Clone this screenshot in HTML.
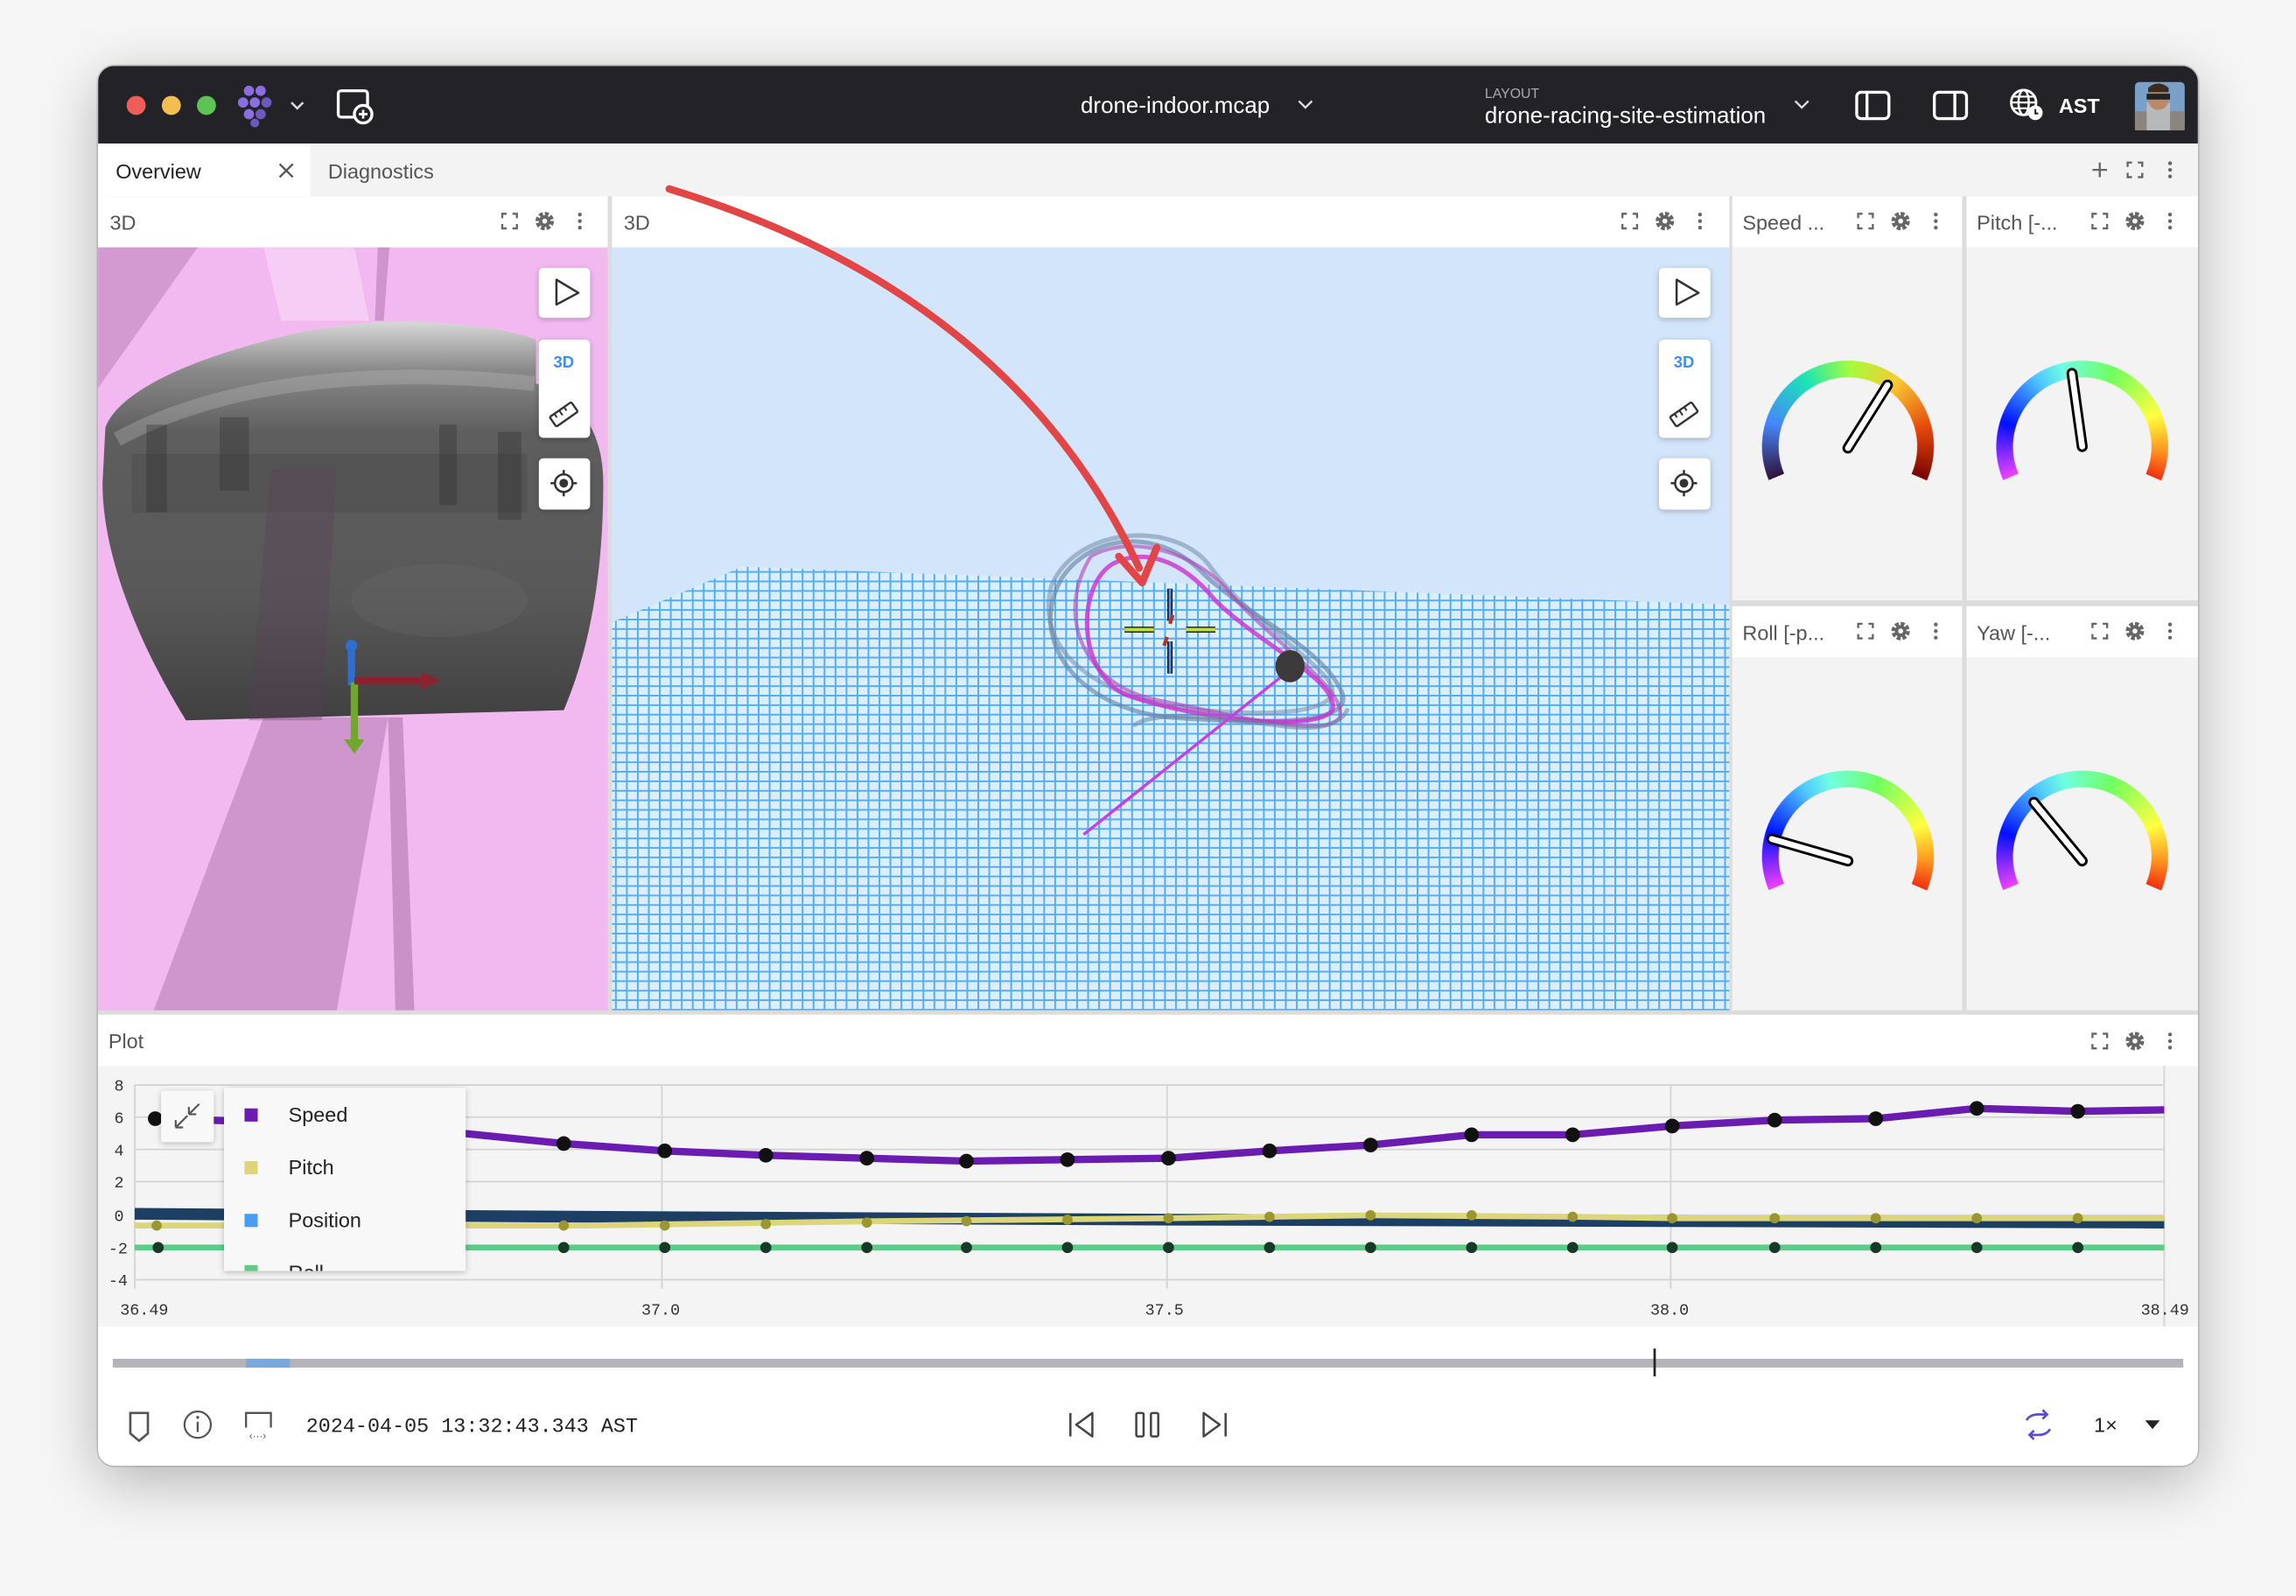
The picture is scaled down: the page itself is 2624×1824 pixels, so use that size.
<!DOCTYPE html>
<html><head><meta charset="utf-8"><style>
html,body{margin:0;padding:0;width:2624px;height:1824px;overflow:hidden;background:#f6f6f6;}
#w{position:absolute;left:0;top:0;width:1568px;height:1090px;transform:scale(1.67347,1.67339);transform-origin:0 0;font-family:"Liberation Sans",sans-serif;}
.win{position:absolute;left:67px;top:45px;width:1434px;height:956px;border-radius:11px;background:#fff;box-shadow:0 10px 40px rgba(0,0,0,.28),0 0 0 1px rgba(0,0,0,.15);overflow:hidden;}
.g{position:absolute;width:118px;height:118px;border-radius:50%;
-webkit-mask:radial-gradient(circle closest-side,transparent 47px,#000 47.6px,#000 58.4px,transparent 59px);
mask:radial-gradient(circle closest-side,transparent 47px,#000 47.6px,#000 58.4px,transparent 59px);}
.sp{background:conic-gradient(from 247deg,#30123b 0deg,#4686fb 40deg,#1ae4b6 80deg,#a4fc3c 115deg,#f9c932 150deg,#e4460a 190deg,#7a0403 226deg,transparent 226.5deg);}
.rb{background:conic-gradient(from 247deg,#f040ff 0deg,#0010ff 40deg,#50c8ff 80deg,#70ffe0 100deg,#70ff60 135deg,#ffff40 180deg,#ff9a20 205deg,#f03010 226deg,transparent 226.5deg);}
</style></head><body><div id="w">
<div class="win"></div>
<svg style="position:absolute;left:0;top:0" width="1568" height="1090" viewBox="0 0 1568 1090">
<defs>
<clipPath id="wc"><rect x="67" y="45" width="1434" height="956" rx="11"/></clipPath>
<pattern id="grid" width="7.5" height="6.5" patternUnits="userSpaceOnUse"><rect width="7.5" height="6.5" fill="#dbeefc"/><path d="M0 0.6H7.5M0.6 0V6.5" stroke="#56aef0" stroke-width="1.2"/></pattern>
<linearGradient id="cam" x1="0" y1="0" x2="0" y2="1"><stop offset="0" stop-color="#d8d8d8"/><stop offset=".12" stop-color="#8a8a8a"/><stop offset=".28" stop-color="#5e5e5e"/><stop offset=".7" stop-color="#585858"/><stop offset="1" stop-color="#404040"/></linearGradient>
<filter id="sh" x="-20%" y="-20%" width="140%" height="140%"><feDropShadow dx="0" dy="1" stdDeviation="2" flood-opacity=".25"/></filter>
<g id="hic"><path d="M-5 -2V-5H-2M2 -5H5V-2M5 2V5H2M-2 5H-5V2" fill="none" stroke="#666" stroke-width="1.4"/></g>
<g id="gear"><circle r="4.6" fill="none" stroke="#666" stroke-width="3.4" stroke-dasharray="2.4 1.2"/><circle r="4" fill="#666"/><circle r="1.7" fill="#fff"/></g>
<g id="keb"><circle cy="-4.5" r="1.3" fill="#666"/><circle r="1.3" fill="#666"/><circle cy="4.5" r="1.3" fill="#666"/></g>
<g id="ic3"><use href="#hic"/><use href="#gear" x="24"/><use href="#keb" x="48"/></g>
</defs>
<g clip-path="url(#wc)">
<rect x="67" y="45" width="1434" height="53" fill="#232327"/>
<circle cx="93" cy="72" r="6.5" fill="#ee5e56"/><circle cx="117" cy="72" r="6.5" fill="#f4bd4f"/><circle cx="141" cy="72" r="6.5" fill="#5dc353"/>
<g fill="#8b6fe0"><circle cx="170" cy="62" r="3.5"/><circle cx="178" cy="62" r="3.5"/><circle cx="166" cy="70" r="3.5"/><circle cx="174" cy="70" r="3.5"/><circle cx="182" cy="70" r="3.5" fill="#6f59c0"/><circle cx="170" cy="78" r="3.5"/><circle cx="178" cy="78" r="3.5" fill="#6f59c0"/><circle cx="174" cy="84" r="3" fill="#6f59c0"/></g>
<path d="M199 70l4 4 4-4" fill="none" stroke="#ddd" stroke-width="1.5"/>
<rect x="231" y="62" width="20" height="18" rx="2" fill="none" stroke="#fff" stroke-width="2"/><circle cx="248" cy="78" r="6" fill="#232327" stroke="#fff" stroke-width="2"/><path d="M248 75v6M245 78h6" stroke="#fff" stroke-width="1.6"/>
<text x="738" y="77" fill="#fff" font-size="15.5">drone-indoor.mcap</text>
<path d="M887 69l4.5 4.5 4.5-4.5" fill="none" stroke="#ddd" stroke-width="1.4"/>
<text x="1014" y="67" fill="#aaa" font-size="9.5">LAYOUT</text>
<text x="1014" y="84" fill="#fff" font-size="15.5">drone-racing-site-estimation</text>
<path d="M1226 69l4.5 4.5 4.5-4.5" fill="none" stroke="#ddd" stroke-width="1.4"/>
<rect x="1268" y="63" width="22" height="18" rx="3" fill="none" stroke="#fff" stroke-width="2"/><path d="M1275 63v18" stroke="#fff" stroke-width="2"/>
<rect x="1321" y="63" width="22" height="18" rx="3" fill="none" stroke="#fff" stroke-width="2"/><path d="M1335 63v18" stroke="#fff" stroke-width="2"/>
<circle cx="1382" cy="70" r="8.5" fill="none" stroke="#fff" stroke-width="1.7"/><ellipse cx="1382" cy="70" rx="3.5" ry="8.5" fill="none" stroke="#fff" stroke-width="1.5"/><path d="M1374 70h17M1375 66h14M1375 74h14" stroke="#fff" stroke-width="1.3"/><circle cx="1390" cy="77" r="5" fill="#fff"/><path d="M1390 74.5v3h2" stroke="#232327" stroke-width="1.2" fill="none"/>
<text x="1406" y="77" fill="#fff" font-size="14" font-weight="bold">AST</text>
<rect x="1458" y="56" width="34" height="33" rx="3" fill="#7aa0c8"/><rect x="1458" y="76" width="34" height="13" fill="#8a8580"/><rect x="1466" y="70" width="16" height="19" fill="#b6b8ba"/><circle cx="1474" cy="68" r="7" fill="#b88a6a"/><rect x="1466" y="64" width="16" height="4" fill="#222"/><path d="M1467 60q7-6 14 0v3h-14z" fill="#3a2a20"/>
<rect x="67" y="98" width="1434" height="36" fill="#f3f3f3"/>
<rect x="67" y="98" width="145" height="36" fill="#fff"/>
<text x="79" y="122" fill="#222" font-size="14">Overview</text>
<path d="M191 112l9 9M200 112l-9 9" stroke="#555" stroke-width="1.4"/>
<text x="224" y="122" fill="#555" font-size="14">Diagnostics</text>
<path d="M1434 111v10M1429 116h10" stroke="#666" stroke-width="1.4"/><use href="#hic" x="1458" y="116"/><use href="#keb" x="1482" y="116"/>
<rect x="67" y="134" width="1434" height="560" fill="#dcdcdc"/>
<rect x="67" y="134" width="348" height="35" fill="#fff"/>
<text x="75" y="157" fill="#555" font-size="14">3D</text><use href="#ic3" x="348" y="151"/>
<rect x="67" y="169" width="348" height="521" fill="#f2b9f1"/>
<path d="M67 169h68L67 265z" fill="#d29ad0"/>
<path d="M180 169h62l10 50h-60z" fill="#f6cdf5"/>
<path d="M258 169h8l-4 50h-6z" fill="#cf94cd"/>
<path d="M180 490h85l-35 200H105z" fill="#cf95cd"/>
<path d="M265 490h10l8 200h-13z" fill="#ca90c8"/>
<path d="M72 292C80 270 120 250 170 236C210 224 250 218 290 220C330 222 350 226 366 232V262C400 272 412 300 412 330C412 400 400 450 385 485L127 492C95 440 70 380 70 330Z" fill="url(#cam)"/>
<path d="M80 300C150 262 250 250 365 262" stroke="#bbb" stroke-width="10" fill="none" opacity=".35"/>
<path d="M90 310h270v40H90z" fill="#3c3c3c" opacity=".25"/>
<g fill="#2e2e2e" opacity=".35"><rect x="100" y="290" width="14" height="60"/><rect x="150" y="285" width="20" height="50"/><rect x="300" y="290" width="12" height="55"/><rect x="340" y="295" width="16" height="60"/></g>
<ellipse cx="300" cy="410" rx="60" ry="25" fill="#666" opacity=".35"/>
<path d="M185 320L170 492H220L230 320z" fill="#5a3d5a" opacity=".3"/>
<path d="M240 440v28" stroke="#2c6fd0" stroke-width="5"/><circle cx="240" cy="441" r="4" fill="#2c6fd0"/>
<path d="M242 466v40" stroke="#6fa82a" stroke-width="5"/><path d="M235 505h14l-7 10z" fill="#6fa82a"/>
<path d="M242 465h48" stroke="#8a2230" stroke-width="5"/><path d="M288 459l13 6-13 6z" fill="#8a2230"/>
<g filter="url(#sh)"><rect x="368" y="183" width="35" height="34" rx="3" fill="#fff"/><rect x="368" y="232" width="35" height="67" rx="3" fill="#fff"/><rect x="368" y="313" width="35" height="35" rx="3" fill="#fff"/></g>
<path d="M380 191l15 9-15 8z" fill="none" stroke="#333" stroke-width="1.5" stroke-linejoin="round"/>
<text x="385" y="251" text-anchor="middle" fill="#3f8ef0" font-size="11" font-weight="bold">3D</text>
<g transform="rotate(-35 385 283)"><rect x="376" y="279" width="18" height="8" rx="1" fill="none" stroke="#333" stroke-width="1.4"/><path d="M380 279v3M384 279v4M388 279v3" stroke="#333" stroke-width="1.2"/></g>
<circle cx="385" cy="330" r="6" fill="none" stroke="#333" stroke-width="1.5"/><circle cx="385" cy="330" r="3" fill="#333"/><path d="M385 321v3M385 336v3M376 330h3M391 330h3" stroke="#333" stroke-width="1.5"/>
<rect x="418" y="134" width="763" height="35" fill="#fff"/>
<text x="426" y="157" fill="#555" font-size="14">3D</text><use href="#ic3" x="1113" y="151"/>
<rect x="418" y="169" width="763" height="521" fill="#d3e5fa"/>
<path d="M418 425L507 387L1181 413V690H418z" fill="url(#grid)"/>
<g fill="none" stroke-linecap="round">
<path d="M725 395C700 440 740 485 800 490C870 495 930 495 915 470C900 440 850 420 820 390C790 360 745 365 725 395Z" stroke="#5f7f9f" stroke-width="3" opacity=".6"/>
<path d="M718 400C705 450 760 480 820 485C880 490 925 485 905 462C885 440 850 420 825 385C800 355 735 360 718 400Z" stroke="#6a84a0" stroke-width="3" opacity=".5"/>
<path d="M760 385C735 400 735 460 770 475C820 492 900 500 910 485C915 465 860 440 830 410C805 380 780 375 760 385Z" stroke="#cc2fd0" stroke-width="3" opacity=".8"/>
<path d="M745 380C720 420 740 468 790 478C840 488 905 505 915 490C920 470 870 440 840 405C815 375 770 365 745 380Z" stroke="#b040b8" stroke-width="2.5" opacity=".6"/>
<path d="M775 495C790 485 830 490 870 495C900 500 915 495 920 485" stroke="#6a84a0" stroke-width="3" opacity=".55"/>
</g>
<path d="M740 570L884 455" stroke="#c440e0" stroke-width="2"/>
<ellipse cx="881" cy="455" rx="10" ry="11" fill="#3e3a3c"/>
<path d="M799 402v22M799 438v22" stroke="#000" stroke-width="3.5"/><path d="M799 402v22M799 438v22" stroke="#5b8ee0" stroke-width="1.8"/>
<path d="M768 430h20M810 430h20" stroke="#000" stroke-width="4"/><path d="M768 430h20M810 430h20" stroke="#b8e040" stroke-width="2.5"/>
<path d="M801 420l-2 6M797 435l-2 6" stroke="#a03a2a" stroke-width="2.5"/>
<g filter="url(#sh)"><rect x="1133" y="183" width="35" height="34" rx="3" fill="#fff"/><rect x="1133" y="232" width="35" height="67" rx="3" fill="#fff"/><rect x="1133" y="313" width="35" height="35" rx="3" fill="#fff"/></g>
<path d="M1145 191l15 9-15 8z" fill="none" stroke="#333" stroke-width="1.5" stroke-linejoin="round"/>
<text x="1150" y="251" text-anchor="middle" fill="#3f8ef0" font-size="11" font-weight="bold">3D</text>
<g transform="rotate(-35 1150 283)"><rect x="1141" y="279" width="18" height="8" rx="1" fill="none" stroke="#333" stroke-width="1.4"/><path d="M1145 279v3M1149 279v4M1153 279v3" stroke="#333" stroke-width="1.2"/></g>
<circle cx="1150" cy="330" r="6" fill="none" stroke="#333" stroke-width="1.5"/><circle cx="1150" cy="330" r="3" fill="#333"/><path d="M1150 321v3M1150 336v3M1141 330h3M1156 330h3" stroke="#333" stroke-width="1.5"/>
<path d="M457 129Q690 200 778 388" fill="none" stroke="#e24545" stroke-width="5" stroke-linecap="round"/>
<path d="M764 380L780 398L790 374" fill="none" stroke="#e24545" stroke-width="5" stroke-linecap="round" stroke-linejoin="round"/>
<rect x="1183" y="134" width="157" height="35" fill="#fff"/><rect x="1183" y="169" width="157" height="241" fill="#f3f3f3"/>
<rect x="1343" y="134" width="158" height="35" fill="#fff"/><rect x="1343" y="169" width="158" height="241" fill="#f3f3f3"/>
<rect x="1183" y="414" width="157" height="35" fill="#fff"/><rect x="1183" y="449" width="157" height="241" fill="#f3f3f3"/>
<rect x="1343" y="414" width="158" height="35" fill="#fff"/><rect x="1343" y="449" width="158" height="241" fill="#f3f3f3"/>
<g fill="#555" font-size="14"><text x="1190" y="157">Speed ...</text><text x="1350" y="157">Pitch [-...</text><text x="1190" y="437">Roll [-p...</text><text x="1350" y="437">Yaw [-...</text></g>
<use href="#ic3" x="1274" y="151"/><use href="#ic3" x="1434" y="151"/><use href="#ic3" x="1274" y="431"/><use href="#ic3" x="1434" y="431"/>
<rect x="67" y="693" width="1434" height="35" fill="#fff"/>
<text x="74" y="716" fill="#555" font-size="14">Plot</text><use href="#ic3" x="1434" y="711"/>
<rect x="67" y="728" width="1434" height="178" fill="#f4f4f4"/>
<g stroke="#d6d6d6" stroke-width="1.2"><path d="M92 741H1478M92 763H1478M92 785H1478M92 807H1478M92 830H1478M92 852H1478M92 874H1478"/><path d="M92 741V880M452 741V880M797 741V880M1141 741V880M1478 728V906"/></g>
<g font-family="Liberation Mono,monospace" font-size="11" fill="#333"><text x="78" y="745">8</text><text x="78" y="767">6</text><text x="78" y="789">4</text><text x="78" y="811">2</text><text x="78" y="834">0</text><text x="74" y="856">-2</text><text x="74" y="878">-4</text>
<text x="82" y="898">36.49</text><text x="438" y="898">37.0</text><text x="782" y="898">37.5</text><text x="1127" y="898">38.0</text><text x="1462" y="898">38.49</text></g>
<path d="M92 829L400 831L800 833L1478 835" stroke="#1d3f63" stroke-width="8" fill="none"/>
<path d="M92 837L400 837L600 834L800 832L936 830L1074 831L1142 832L1478 832" stroke="#dcd57a" stroke-width="4" fill="none"/>
<path d="M92 852H1478" stroke="#5ecb86" stroke-width="4"/>
<path d="M106 764L176 766L245 770L316 774L385 781L454 786L523 789L592 791L660 793L729 792L798 791L867 786L936 782L1005 775L1074 775L1142 769L1212 765L1281 764L1350 757L1419 759L1478 758" stroke="#6a1bb0" stroke-width="5" fill="none"/>
<g fill="#111"><circle cx="106" cy="764" r="5"/><circle cx="385" cy="781" r="5"/><circle cx="454" cy="786" r="5"/><circle cx="523" cy="789" r="5"/><circle cx="592" cy="791" r="5"/><circle cx="660" cy="793" r="5"/><circle cx="729" cy="792" r="5"/><circle cx="798" cy="791" r="5"/><circle cx="867" cy="786" r="5"/><circle cx="936" cy="782" r="5"/><circle cx="1005" cy="775" r="5"/><circle cx="1074" cy="775" r="5"/><circle cx="1142" cy="769" r="5"/><circle cx="1212" cy="765" r="5"/><circle cx="1281" cy="764" r="5"/><circle cx="1350" cy="757" r="5"/><circle cx="1419" cy="759" r="5"/></g>
<g fill="#9a9630"><circle cx="107" cy="837" r="3.5"/><circle cx="385" cy="837" r="3.5"/><circle cx="454" cy="837" r="3.5"/><circle cx="523" cy="836" r="3.5"/><circle cx="592" cy="835" r="3.5"/><circle cx="660" cy="834" r="3.5"/><circle cx="729" cy="833" r="3.5"/><circle cx="798" cy="832" r="3.5"/><circle cx="867" cy="831" r="3.5"/><circle cx="936" cy="830" r="3.5"/><circle cx="1005" cy="830" r="3.5"/><circle cx="1074" cy="831" r="3.5"/><circle cx="1142" cy="832" r="3.5"/><circle cx="1212" cy="832" r="3.5"/><circle cx="1281" cy="832" r="3.5"/><circle cx="1350" cy="832" r="3.5"/><circle cx="1419" cy="832" r="3.5"/></g>
<g fill="#163a26"><circle cx="108" cy="852" r="3.8"/><circle cx="385" cy="852" r="3.8"/><circle cx="454" cy="852" r="3.8"/><circle cx="523" cy="852" r="3.8"/><circle cx="592" cy="852" r="3.8"/><circle cx="660" cy="852" r="3.8"/><circle cx="729" cy="852" r="3.8"/><circle cx="798" cy="852" r="3.8"/><circle cx="867" cy="852" r="3.8"/><circle cx="936" cy="852" r="3.8"/><circle cx="1005" cy="852" r="3.8"/><circle cx="1074" cy="852" r="3.8"/><circle cx="1142" cy="852" r="3.8"/><circle cx="1212" cy="852" r="3.8"/><circle cx="1281" cy="852" r="3.8"/><circle cx="1350" cy="852" r="3.8"/><circle cx="1419" cy="852" r="3.8"/></g>
<g filter="url(#sh)"><rect x="110" y="745" width="36" height="35" rx="2" fill="#f8f8f8"/><rect x="153" y="743" width="165" height="125" fill="#f8f8f8"/></g>
<path d="M120 770l8-8M120 770v-5M120 770h5M136 754l-7 7M129 761v-5M129 761h5" stroke="#555" stroke-width="1.3" fill="none"/>
<rect x="167" y="757" width="9" height="9" fill="#6a1bb0"/><rect x="167" y="793" width="9" height="9" fill="#dcd57a"/><rect x="167" y="829" width="9" height="9" fill="#4a9cf0"/><rect x="167" y="864" width="9" height="4" fill="#5ecb86"/>
<g fill="#222" font-size="14"><text x="197" y="766">Speed</text><text x="197" y="802">Pitch</text><text x="197" y="838">Position</text></g>
<svg x="153" y="743" width="165" height="125"><text x="44" y="131" fill="#222" font-size="14">Roll</text></svg>
<rect x="67" y="906" width="1434" height="95" fill="#fff"/>
<rect x="77" y="928" width="1414" height="6" fill="#b4b4b8"/>
<rect x="168" y="928" width="30" height="6" fill="#7aa8dd"/>
<path d="M1130 921V940" stroke="#222" stroke-width="1.6"/>
<path d="M89 965h12v14l-6 5-6-5z" fill="none" stroke="#555" stroke-width="1.6"/>
<circle cx="135" cy="973" r="9" fill="none" stroke="#555" stroke-width="1.3"/><path d="M135 971v7" stroke="#555" stroke-width="1.4"/><circle cx="135" cy="968" r="1" fill="#555"/>
<path d="M168 975v-10h17v10" fill="none" stroke="#555" stroke-width="1.4"/><text x="176" y="983" text-anchor="middle" fill="#555" font-size="7">‹···›</text>
<text x="209" y="978" fill="#222" font-size="14" font-family="Liberation Mono,monospace">2024-04-05 13:32:43.343 AST</text>
<path d="M731 965v16M746 965l-11 8 11 8z" fill="none" stroke="#444" stroke-width="1.5" stroke-linejoin="round"/>
<rect x="776" y="965" width="5" height="16" rx="1" fill="none" stroke="#444" stroke-width="1.5"/><rect x="786" y="965" width="5" height="16" rx="1" fill="none" stroke="#444" stroke-width="1.5"/>
<path d="M837 965v16M822 965l11 8-11 8z" fill="none" stroke="#444" stroke-width="1.5" stroke-linejoin="round"/>
<path d="M1384 970a8 6 0 0 1 8-4h6M1395 963l3 3-3 3M1400 976a8 6 0 0 1-8 4h-6M1389 983l-3-3 3-3" fill="none" stroke="#5b4bd8" stroke-width="1.6"/>
<text x="1430" y="978" fill="#222" font-size="14">1×</text>
<path d="M1465 970h10l-5 6z" fill="#222"/>
</g>
</svg>
<div class="g sp" style="left:1203px;top:246px"></div>
<div class="g rb" style="left:1363px;top:246px"></div>
<div class="g rb" style="left:1203px;top:526px"></div>
<div class="g rb" style="left:1363px;top:526px"></div>
<svg style="position:absolute;left:0;top:0" width="1568" height="1090" viewBox="0 0 1568 1090">
<g stroke-linecap="round" fill="none">
<path d="M1262 306L1289 263M1422 305L1415 255M1262 588L1210 573M1422 588L1389 548" stroke="#000" stroke-width="7.5"/>
<path d="M1262 306L1289 263M1422 305L1415 255M1262 588L1210 573M1422 588L1389 548" stroke="#fff" stroke-width="4"/>
</g></svg>
</div></body></html>
